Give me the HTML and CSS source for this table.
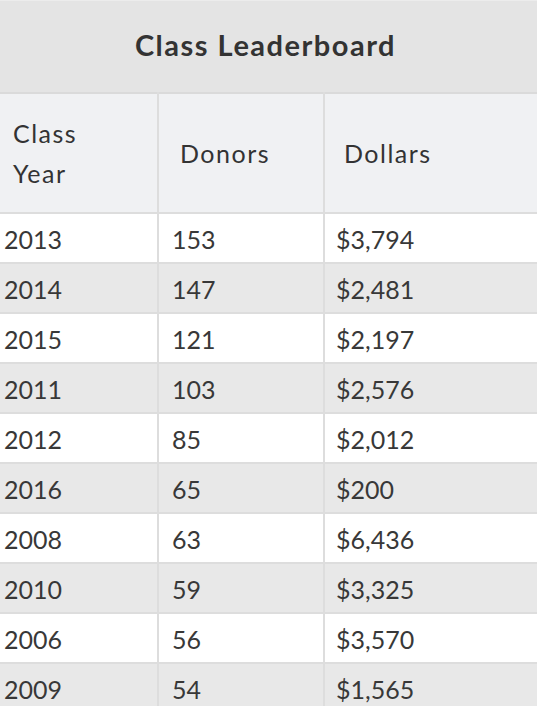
FILE: index.html
```html
<!DOCTYPE html>
<html lang="en">
<head>
  <meta charset="UTF-8">
  <meta name="viewport" content="width=device-width, initial-scale=1.0">
  <title>Class Leaderboard</title>
  <link rel="stylesheet" href="styles.css">
</head>
<body>
  <div class="board">
    <h1 class="title">Class Leaderboard</h1>
    <table class="leaders">
      <colgroup>
        <col class="c-year">
        <col class="c-donors">
        <col class="c-dollars">
      </colgroup>
      <thead>
        <tr>
          <th class="year">Class<br>Year</th>
          <th class="donors">Donors</th>
          <th class="dollars">Dollars</th>
        </tr>
      </thead>
      <tbody>
        <tr><td class="year">2013</td><td class="donors">153</td><td class="dollars">$3,794</td></tr>
        <tr><td class="year">2014</td><td class="donors">147</td><td class="dollars">$2,481</td></tr>
        <tr><td class="year">2015</td><td class="donors">121</td><td class="dollars">$2,197</td></tr>
        <tr><td class="year">2011</td><td class="donors">103</td><td class="dollars">$2,576</td></tr>
        <tr><td class="year">2012</td><td class="donors">85</td><td class="dollars">$2,012</td></tr>
        <tr><td class="year">2016</td><td class="donors">65</td><td class="dollars">$200</td></tr>
        <tr><td class="year">2008</td><td class="donors">63</td><td class="dollars">$6,436</td></tr>
        <tr><td class="year">2010</td><td class="donors">59</td><td class="dollars">$3,325</td></tr>
        <tr><td class="year">2006</td><td class="donors">56</td><td class="dollars">$3,570</td></tr>
        <tr><td class="year">2009</td><td class="donors">54</td><td class="dollars">$1,565</td></tr>
      </tbody>
    </table>
  </div>
</body>
</html>
```

FILE: styles.css
```css
*{
  margin: 0;
  padding: 0;
  box-sizing: border-box;
}
body{
  font-family: Lato, "Open Sans", sans-serif;
  color: #383838;
  background: #fff;
  overflow: hidden;
}
.board{
  width: 537px;
}
.title{
  height: 92px;
  line-height: 88px;
  text-align: center;
  font-size: 29px;
  font-weight: 700;
  letter-spacing: 1.5px;
  color: #333;
  background: #e4e4e4;
  border-top: 1px solid #ececec;
  padding-right: 6px;
}
.leaders{
  width: 540px;
  table-layout: fixed;
  border-collapse: collapse;
}
.leaders .c-year{ width: 158px; }
.leaders .c-donors{ width: 166px; }
.leaders .c-dollars{ width: 216px; }
.leaders th,
.leaders td{
  text-align: left;
  font-weight: 400;
  border: 2px solid #dddddd;
  border-left-color: #e0e0e0;
}
.leaders tr > :first-child{
  border-left: none;
}
.leaders th{
  height: 120px;
  background: #f0f1f3;
  font-size: 25px;
  line-height: 40px;
  letter-spacing: 1.5px;
  border-top: 2px solid #dadada;
  color: #333;
}
.leaders th.year{ padding-left: 13px; }
.leaders th.donors{ padding-left: 21px; }
.leaders th.dollars{ padding-left: 19px; }
.leaders td{
  height: 50px;
  font-size: 25px;
  line-height: 46px;
  padding-top: 1px;
}
.leaders td.year{ padding-left: 4px; }
.leaders td.donors{ padding-left: 13px; }
.leaders td.dollars{ padding-left: 11px; }
.leaders tbody tr:nth-child(even) td{
  background: #e8e8e8;
}
```
